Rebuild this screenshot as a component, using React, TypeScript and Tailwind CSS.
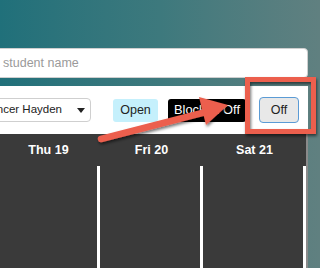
import React from "react";

export default function App() {
  return (
    <div
      className="relative w-[320px] h-[268px] overflow-hidden bg-gradient-to-r from-[#20707a] via-[#3d797d] to-[#608080]"
      style={{ fontFamily: '"Liberation Sans", Arial, sans-serif' }}
    >
      <div className="h-[48px]" />
      {/* search input */}
      <div className="ml-[-10px] w-[318px] h-[30px] bg-white border border-[#cfcfcf] rounded-[4px] flex items-center pl-[12px] text-[12.5px] text-[#9a9a9a]">
        student name
      </div>
      <div className="h-[8px]" />
      {/* toolbar panel */}
      <div className="w-[308px] h-[48px] bg-white flex items-center">
        <div className="ml-[-40px] w-[131px] h-[24px] border border-[#cfcfcf] rounded-[4px] flex items-center justify-end overflow-hidden pr-[5px] text-[11.5px] text-[#222] whitespace-nowrap">
          <span>Spencer Hayden</span>
          <span className="ml-[15px] w-0 h-0 border-l-[4px] border-r-[4px] border-t-[5px] border-l-transparent border-r-transparent border-t-[#222]" />
        </div>
        <div className="ml-[22px] w-[45px] h-[23px] rounded-[3px] bg-[#c5f0fc] flex items-center justify-center text-[12.5px] text-[#222]">
          Open
        </div>
        <div className="ml-[10px] w-[78px] h-[23px] rounded-[3px] bg-black flex items-center justify-center text-[12.8px] text-white whitespace-nowrap">
          Blocked Off
        </div>
        <div className="ml-[13px] w-[40px] h-[26px] rounded-[4px] border border-[#5b9bd5] bg-[#e8e8e8] flex items-center justify-center text-[12.5px] text-[#222]">
          Off
        </div>
      </div>
      {/* calendar */}
      <div className="ml-[-3px] w-[311px] h-[134px] bg-[#3a3a3a] flex">
        {["Thu 19", "Fri 20", "Sat 21"].map((d) => (
          <div key={d} className="w-[103px] flex flex-col">
            <div className="h-[32px] flex items-center justify-center text-white font-bold text-[12.5px]">
              {d}
            </div>
            <div className="flex-1 border-r-[3px] border-white" />
          </div>
        ))}
        <div className="w-[2px] bg-[#8a8a8a]" />
      </div>

      {/* annotation overlay */}
      <svg className="absolute left-0 top-0" width="320" height="268" viewBox="0 0 320 268">
        <defs>
          <filter id="sh" x="-20%" y="-20%" width="140%" height="140%">
            <feDropShadow dx="1" dy="2" stdDeviation="1.5" floodColor="#000" floodOpacity="0.55" />
          </filter>
        </defs>
        <g filter="url(#sh)">
          <rect x="247.5" y="79.5" width="66" height="52" fill="none" stroke="#ec5e4d" strokeWidth="5" />
          <line x1="101" y1="139" x2="206" y2="112" stroke="#ec5e4d" strokeWidth="6.5" strokeLinecap="round" />
          <polygon points="228,105 199,97 206,125" fill="#ec5e4d" />
        </g>
      </svg>
    </div>
  );
}
